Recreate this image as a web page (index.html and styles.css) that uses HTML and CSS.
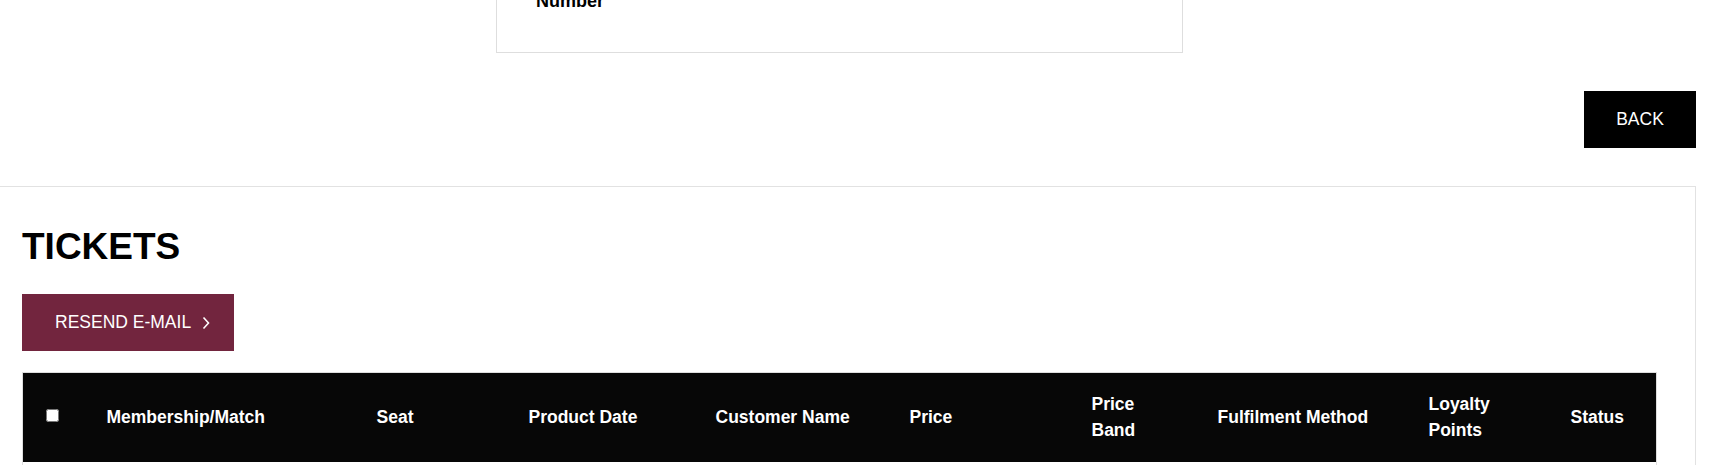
FILE: index.html
```html
<!DOCTYPE html>
<html lang="en">
<head>
<meta charset="utf-8">
<title>Tickets</title>
<link rel="stylesheet" href="styles.css">
</head>
<body>
  <div class="detail-box">
    <div class="detail-label">Number</div>
  </div>

  <div class="actions">
    <button class="btn-back" type="button">BACK</button>
  </div>

  <section class="card">
    <h2 class="card-title">TICKETS</h2>
    <button class="btn-resend" type="button">
      <span>RESEND E-MAIL</span>
      <svg class="chev" width="8" height="14" viewBox="0 0 8 14" aria-hidden="true">
        <polyline points="1.5,1.5 6.5,7 1.5,12.5" fill="none" stroke="#fff" stroke-width="1.6"/>
      </svg>
    </button>

    <table class="tickets">
      <colgroup>
        <col class="c-check">
        <col class="c-match">
        <col class="c-seat">
        <col class="c-date">
        <col class="c-name">
        <col class="c-price">
        <col class="c-band">
        <col class="c-fulfil">
        <col class="c-points">
        <col class="c-status">
      </colgroup>
      <thead>
        <tr>
          <th class="th-check"><input type="checkbox" class="check"></th>
          <th>Membership/Match</th>
          <th>Seat</th>
          <th>Product Date</th>
          <th>Customer Name</th>
          <th>Price</th>
          <th>Price Band</th>
          <th>Fulfilment Method</th>
          <th>Loyalty Points</th>
          <th>Status</th>
        </tr>
      </thead>
      <tbody>
        <tr class="row">
          <td></td><td></td><td></td><td></td><td></td>
          <td></td><td></td><td></td><td></td><td></td>
        </tr>
      </tbody>
    </table>
  </section>
</body>
</html>
```

FILE: styles.css
```css
html, body {
  overflow: hidden;
}

body {
  margin: 0;
  background: #ffffff;
  font-family: "Liberation Sans", Arial, sans-serif;
  color: #000;
}

.detail-box {
  box-sizing: border-box;
  width: 687px;
  margin: -12px 0 0 496px;
  padding: 0 38px 37px 39px;
  border: 1px solid #dedede;
  border-top: none;
}

.detail-label {
  font-size: 18px;
  font-weight: bold;
  line-height: 27px;
}

.actions {
  display: flex;
  justify-content: flex-end;
  margin: 38px 13px 38px 0;
}

.btn-back {
  width: 112px;
  height: 57px;
  border: none;
  background: #000;
  color: #fff;
  font-family: inherit;
  font-size: 17.5px;
  padding: 0;
  cursor: pointer;
}

.card {
  margin-right: 13px;
  border-top: 1px solid #e2e2e2;
  border-right: 1px solid #e2e2e2;
  padding: 39px 0 40px 22px;
}

.card-title {
  margin: 0;
  font-size: 37px;
  line-height: 42px;
  font-weight: bold;
}

.btn-resend {
  display: flex;
  align-items: center;
  gap: 11px;
  height: 57px;
  margin-top: 26px;
  padding: 0 24px 0 33px;
  border: none;
  background: #72253e;
  color: #fff;
  font-family: inherit;
  font-size: 17.5px;
  cursor: pointer;
}

.chev {
  display: block;
}

.tickets {
  margin-top: 21px;
  width: 1634px;
  table-layout: fixed;
  border-collapse: collapse;
  border: 1px solid #dddddd;
}

.c-check { width: 65px; }
.c-match { width: 270px; }
.c-seat { width: 152px; }
.c-date { width: 187px; }
.c-name { width: 194px; }
.c-price { width: 182px; }
.c-band { width: 126px; }
.c-fulfil { width: 211px; }
.c-points { width: 142px; }
.c-status { width: 105px; }

.tickets th {
  background: #070707;
  color: #fff;
  text-align: left;
  vertical-align: middle;
  font-size: 17.5px;
  font-weight: bold;
  line-height: 25.5px;
  padding: 19px 20px 19px 19px;
}

.tickets .th-check {
  padding-left: 19px;
  padding-right: 0;
}

.check {
  display: block;
  width: 13px;
  height: 13px;
  margin: -4px 0 0 4px;
}

.row td {
  height: 60px;
  border-bottom: 1px solid #dddddd;
}
```
